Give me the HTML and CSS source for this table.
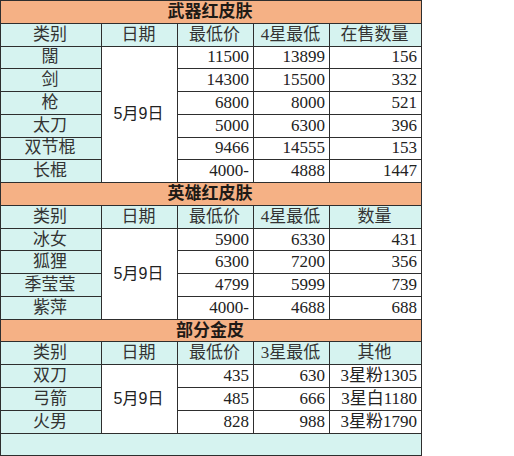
FILE: index.html
```html
<!DOCTYPE html>
<html lang="zh">
<head>
<meta charset="utf-8">
<title>皮肤价格</title>
<link rel="stylesheet" href="styles.css">
</head>
<body>
<table class="sheet">
  <colgroup>
    <col class="c-type"><col class="c-date"><col class="c-num"><col class="c-num"><col class="c-last">
  </colgroup>
  <tbody>
    <tr class="title"><td colspan="5">武器红皮肤</td></tr>
    <tr class="head"><td>类别</td><td>日期</td><td>最低价</td><td>4星最低</td><td>在售数量</td></tr>
    <tr><td class="name">闊</td><td class="date" rowspan="6">5月9日</td><td class="num">11500</td><td class="num">13899</td><td class="num">156</td></tr>
    <tr><td class="name">剑</td><td class="num">14300</td><td class="num">15500</td><td class="num">332</td></tr>
    <tr><td class="name">枪</td><td class="num">6800</td><td class="num">8000</td><td class="num">521</td></tr>
    <tr><td class="name">太刀</td><td class="num">5000</td><td class="num">6300</td><td class="num">396</td></tr>
    <tr><td class="name">双节棍</td><td class="num">9466</td><td class="num">14555</td><td class="num">153</td></tr>
    <tr><td class="name">长棍</td><td class="num">4000-</td><td class="num">4888</td><td class="num">1447</td></tr>

    <tr class="title"><td colspan="5">英雄红皮肤</td></tr>
    <tr class="head"><td>类别</td><td>日期</td><td>最低价</td><td>4星最低</td><td>数量</td></tr>
    <tr><td class="name">冰女</td><td class="date" rowspan="4">5月9日</td><td class="num">5900</td><td class="num">6330</td><td class="num">431</td></tr>
    <tr><td class="name">狐狸</td><td class="num">6300</td><td class="num">7200</td><td class="num">356</td></tr>
    <tr><td class="name">季莹莹</td><td class="num">4799</td><td class="num">5999</td><td class="num">739</td></tr>
    <tr><td class="name">紫萍</td><td class="num">4000-</td><td class="num">4688</td><td class="num">688</td></tr>

    <tr class="title"><td colspan="5">部分金皮</td></tr>
    <tr class="head"><td>类别</td><td>日期</td><td>最低价</td><td>3星最低</td><td>其他</td></tr>
    <tr><td class="name">双刀</td><td class="date" rowspan="3">5月9日</td><td class="num">435</td><td class="num">630</td><td class="num">3星粉1305</td></tr>
    <tr><td class="name">弓箭</td><td class="num">485</td><td class="num">666</td><td class="num">3星白1180</td></tr>
    <tr><td class="name">火男</td><td class="num">828</td><td class="num">988</td><td class="num">3星粉1790</td></tr>
    <tr class="blank"><td colspan="5"></td></tr>
  </tbody>
</table>
</body>
</html>
```

FILE: styles.css
```css
html, body {
  margin: 0;
  padding: 0;
  background: #ffffff;
}

.sheet {
  border-collapse: collapse;
  table-layout: fixed;
  width: 421px;
  font-family: "Liberation Serif", "Noto Sans CJK SC", serif;
  font-size: 17px;
  color: #222222;
}

.c-type { width: 101px; }
.c-date { width: 76px; }
.c-num { width: 76px; }
.c-last { width: 92px; }

.sheet tr {
  height: 22.77px;
}

.sheet td {
  border: 1px solid #2e2e2e;
  padding: 0 4px 0 2px;
  line-height: 20px;
  white-space: nowrap;
  overflow: hidden;
  background: #ffffff;
}

.title td {
  background: #f5b185;
  text-align: center;
  font-weight: 700;
  color: #1e1a16;
}

.head td {
  background: #d6f3f0;
  text-align: center;
  color: #333333;
}

.name {
  text-align: center;
  color: #333333;
}

.sheet td.name {
  background: #d6f3f0;
}

.date {
  text-align: center;
  vertical-align: middle;
  font-family: "Liberation Sans", "Noto Sans CJK SC", sans-serif;
  font-size: 16px;
}

.num {
  text-align: right;
}

.sheet .blank td {
  background: #d6f3f0;
}
```
